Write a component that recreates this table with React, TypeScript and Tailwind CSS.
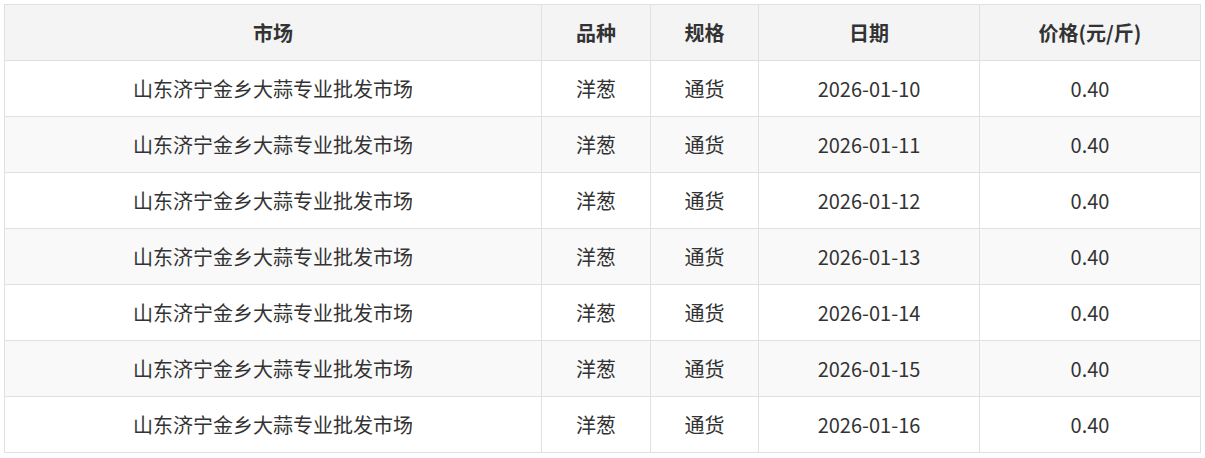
const headers = ["市场", "品种", "规格", "日期", "价格(元/斤)"];

const rows = [10, 11, 12, 13, 14, 15, 16].map((d) => [
  "山东济宁金乡大蒜专业批发市场",
  "洋葱",
  "通货",
  `2026-01-${d}`,
  "0.40",
]);

export default function App() {
  return (
    <div className="bg-white w-[1205px] h-[458px] pt-1 pl-1">
      <div
        className="grid grid-cols-[537px_109px_108px_221px_221px] w-[1197px] border-l border-t border-[#e0e0e0] text-[#333] text-[20px]"
        style={{ fontFamily: '"Noto Sans CJK SC", "Noto Sans", sans-serif' }}
      >
        {headers.map((h) => (
          <div
            key={h}
            className="h-14 flex items-center justify-center border-r border-b border-[#e0e0e0] bg-[#f4f4f4] font-bold"
          >
            {h}
          </div>
        ))}
        {rows.map((r, i) =>
          r.map((c, j) => (
            <div
              key={`${i}-${j}`}
              className={`h-14 flex items-center justify-center border-r border-b border-[#e0e0e0] ${
                i % 2 === 1 ? "bg-[#f9f9f9]" : "bg-white"
              }`}
            >
              {c}
            </div>
          ))
        )}
      </div>
    </div>
  );
}
